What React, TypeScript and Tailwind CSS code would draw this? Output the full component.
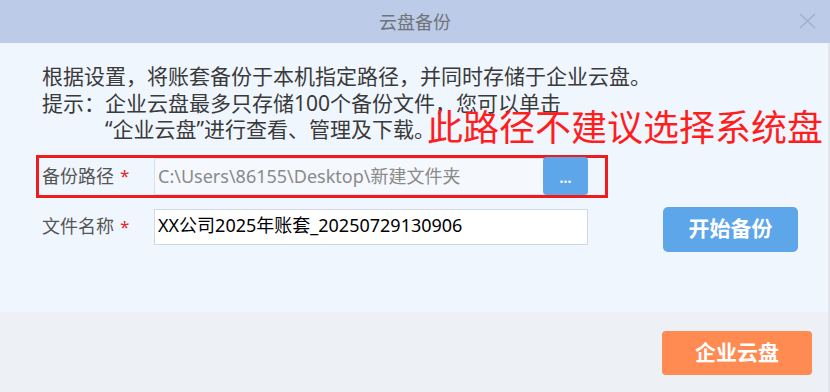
import React from "react";

const font = { fontFamily: '"Noto Sans", "Noto Sans CJK SC", sans-serif' };

export default function App() {
  return (
    <div
      className="w-[830px] h-[392px] flex flex-col overflow-hidden"
      style={font}
    >
      {/* Header */}
      <div className="h-[43px] shrink-0 bg-[#bccbe8] relative flex items-center justify-center">
        <span className="text-[18px] text-[#707478] leading-none">云盘备份</span>
        <svg
          className="absolute left-[799px] top-[13px]"
          width="17"
          height="16"
          viewBox="0 0 17 16"
        >
          <path
            d="M1 1 L16 15 M16 1 L1 15"
            stroke="#a2b1c7"
            strokeWidth="1.6"
            fill="none"
          />
        </svg>
      </div>

      {/* Body */}
      <div className="flex-1 bg-[#f0f6fe] border-r-2 border-[#e2e6ec] relative pl-[42px] pt-[20px]">
        <div className="text-[21px] leading-[26.5px] text-[#3a3a3a]">
          <div>根据设置，将账套备份于本机指定路径，并同时存储于企业云盘。</div>
          <div>提示：企业云盘最多只存储100个备份文件，您可以单击</div>
          <div className="pl-[63px]">“企业云盘”进行查看、管理及下载。</div>
        </div>

        <div
          className="absolute left-[427px] top-[64px] text-[36px] leading-none text-[#ff1e1e]"
          style={{ fontFamily: '"Noto Sans CJK SC", sans-serif' }}
        >
          此路径不建议选择系统盘
        </div>

        {/* Row 1 with red annotation box */}
        <div className="mt-[12px] ml-[-6px] w-[572px] h-[43px] border-[3px] border-[#ee1c1c] pl-[3px] flex items-start">
          <div className="w-[112px] h-[37px] flex items-center text-[18px] text-[#555]">
            备份路径<span className="text-[#e8262b] ml-[6px] text-[17px]">*</span>
          </div>
          <div className="w-[434px] h-[37px] bg-[#f5f8fc] border border-[#d8dfe8] flex items-center justify-between">
            <span className="pl-[3px] text-[18px] text-[#8a8a8a] leading-none">
              C:\Users\86155\Desktop\新建文件夹
            </span>
            <button className="w-[45px] h-[38px] -mr-px bg-[#5ea6ea] rounded-[4px] flex items-center justify-center text-white text-[14px] font-bold leading-none">
              <span className="mt-[4px]">...</span>
            </button>
          </div>
        </div>

        {/* Row 2 */}
        <div className="mt-[11px] flex items-start">
          <div className="w-[112px] h-[36px] flex items-center text-[18px] text-[#555]">
            文件名称<span className="text-[#e8262b] ml-[6px] text-[17px]">*</span>
          </div>
          <div className="w-[434px] h-[36px] bg-white border border-[#cfd8e3] pl-[3px] pt-[3px] text-[18px] leading-[24px] text-black">
            XX公司2025年账套_20250729130906
          </div>
          <button className="ml-[75px] -mt-[2px] w-[135px] h-[45px] bg-[#5ea6ea] rounded-[5px] text-white text-[21px] font-bold flex items-center justify-center">
            开始备份
          </button>
        </div>
      </div>

      {/* Footer */}
      <div className="h-[80px] shrink-0 bg-[#edf0f5] border-r-2 border-[#e2e6ec] flex items-start justify-end pr-[16px] pt-[19px]">
        <button className="w-[150px] h-[44px] bg-[#ff8a52] rounded-[4px] text-white text-[21px] font-bold flex items-center justify-center">
          企业云盘
        </button>
      </div>
    </div>
  );
}
